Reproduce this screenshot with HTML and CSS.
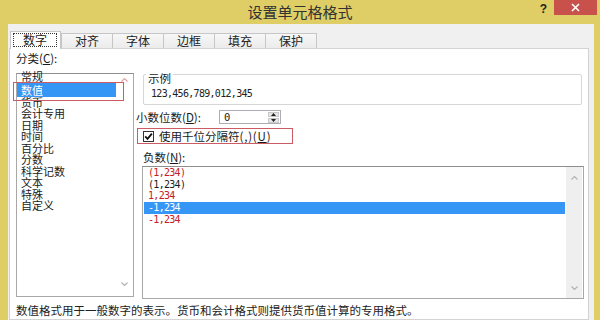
FILE: index.html
```html
<!DOCTYPE html>
<html lang="zh-CN">
<head>
<meta charset="utf-8">
<title>设置单元格格式</title>
<link rel="stylesheet" href="styles.css">
</head>
<body>
<div class="window">
  <div class="titlebar">
    <div></div>
    <div class="title">设置单元格格式</div>
    <div class="controls">
      <span class="help">?</span>
      <span class="close"><svg width="9" height="9" viewBox="0 0 9 9"><path d="M1 1L8 8M8 1L1 8" stroke="#fff" stroke-width="1.6" fill="none"/></svg></span>
    </div>
  </div>
  <div class="frame">
    <div class="tabs">
      <div class="tab active"><span class="focus">数字</span></div>
      <div class="tab">对齐</div>
      <div class="tab">字体</div>
      <div class="tab">边框</div>
      <div class="tab">填充</div>
      <div class="tab">保护</div>
    </div>
    <div class="panel">
      <div class="cols">
        <div class="left">
          <div class="label">分类(<u>C</u>):</div>
          <div class="listbox cat">
            <div class="items">
              <div class="item">常规</div>
              <div class="item sel">数值</div>
              <div class="item">货币</div>
              <div class="item">会计专用</div>
              <div class="item">日期</div>
              <div class="item">时间</div>
              <div class="item">百分比</div>
              <div class="item">分数</div>
              <div class="item">科学记数</div>
              <div class="item">文本</div>
              <div class="item">特殊</div>
              <div class="item">自定义</div>
            </div>
            <div class="vscroll">
              <svg class="chev up-red" width="7" height="4" viewBox="0 0 7 4"><polyline points="0.5,3.5 3.5,0.5 6.5,3.5"/></svg>
              <svg class="chev" width="7" height="4" viewBox="0 0 7 4"><polyline points="0.5,0.5 3.5,3.5 6.5,0.5"/></svg>
            </div>
            <div class="annot"></div>
          </div>
        </div>
        <div class="right">
          <div class="group">
            <div class="legend"><span>示例</span></div>
            <div class="sample num">123,456,789,012,345</div>
          </div>
          <div class="decimals">
            <span class="dlabel">小数位数(<u>D</u>):</span>
            <div class="spin">
              <span class="val num">0</span>
              <div class="spinbtns">
                <span class="sbtn"><svg width="5" height="3" viewBox="0 0 5 3"><polygon points="0,3 2.5,0 5,3"/></svg></span>
                <span class="sbtn"><svg width="5" height="3" viewBox="0 0 5 3"><polygon points="0,0 2.5,3 5,0"/></svg></span>
              </div>
            </div>
          </div>
          <div class="check-row">
            <span class="checkbox"><svg width="9" height="9" viewBox="0 0 9 9"><path d="M1.2 4.4L3.5 6.8L7.9 1.6" stroke="#111" stroke-width="1.8" fill="none"/></svg></span>
            <span class="clabel">使用千位分隔符<span class="ak">(,)(<u>U</u>)</span></span>
          </div>
          <div class="label neg-label">负数(<u>N</u>):</div>
          <div class="listbox neg">
            <div class="items num">
              <div class="item red">(1,234)</div>
              <div class="item">(1,234)</div>
              <div class="item red">1,234</div>
              <div class="item sel">-1,234</div>
              <div class="item red">-1,234</div>
            </div>
            <div class="vscroll track">
              <svg class="chev" width="7" height="4" viewBox="0 0 7 4"><polyline points="0.5,3.5 3.5,0.5 6.5,3.5"/></svg>
              <svg class="chev" width="7" height="4" viewBox="0 0 7 4"><polyline points="0.5,0.5 3.5,3.5 6.5,0.5"/></svg>
            </div>
          </div>
        </div>
      </div>
      <p class="desc">数值格式用于一般数字的表示。货币和会计格式则提供货币值计算的专用格式。</p>
    </div>
  </div>
</div>
</body>
</html>
```

FILE: styles.css
```css
* { box-sizing: border-box; margin: 0; padding: 0; }
html, body { width: 600px; height: 320px; overflow: hidden; }
body {
  background: #dfcd66;
  font-family: "Noto Sans CJK SC", "Noto Sans", sans-serif;
  font-size: 11.5px;
  color: #1a1a1a;
}
u { text-decoration: underline; text-underline-offset: 1px; }

.titlebar {
  height: 24px;
  display: grid;
  grid-template-columns: 1fr auto 1fr;
  align-items: start;
}
.title { font-size: 15px; line-height: 24px; color: #333; }
.controls { display: flex; justify-content: flex-end; align-items: flex-start; }
.help {
  font: bold 12px/18px "Liberation Sans", sans-serif;
  color: #222;
  margin-right: 7px;
}
.close {
  width: 43px;
  height: 15px;
  background: #c8514c;
  display: flex;
  align-items: center;
  justify-content: center;
  margin-right: 3px;
}

.frame {
  margin-left: 8px;
  width: 586px;
  height: 296px;
  background: #f0f0f0;
  padding: 7px 5px 0 1px;
}
.tabs { display: flex; align-items: flex-end; height: 17px; }
.tab {
  width: 52px;
  height: 15px;
  margin-left: -1px;
  border: 1px solid #c6c6c6;
  border-bottom: none;
  background: linear-gradient(#f7f7f7, #ebebeb);
  font-size: 12px;
  line-height: 13px;
  text-align: center;
  color: #222;
}
.tab.active {
  width: 51px;
  height: 18px;
  margin-left: 1px;
  margin-bottom: -1px;
  padding-top: 1px;
  background: #fff;
  position: relative;
  z-index: 1;
}
.tab.active + .tab { margin-left: 0; }
.focus {
  display: block;
  margin-left: 2px;
  width: 44px;
  height: 14px;
  border: 1px dotted #333;
  line-height: 12px;
}

.panel {
  width: 580px;
  height: 272px;
  overflow: hidden;
  background: #fff;
  border: 1px solid #d3d3d3;
  padding: 2px 4px 0 6px;
}
.cols { display: grid; grid-template-columns: 118px 1fr; column-gap: 2px; }

.label { line-height: 14px; }
.left .label { margin-bottom: 8px; }

.listbox {
  display: flex;
  background: #fff;
  border: 1px solid #a8a8a8;
  border-top-color: #8e8e8e;
}
.cat { width: 118px; height: 224px; position: relative; }
.cat .items { width: 99px; margin-top: -3px; font-size: 11px; }
.item { line-height: 11.5px; padding-left: 4px; white-space: nowrap; }
.cat .item.sel { line-height: 14px; background: #3596f5; color: #fff; }
.vscroll {
  flex: 1;
  display: flex;
  flex-direction: column;
  justify-content: space-between;
  align-items: center;
  padding: 4px 0 10px;
}
.chev polyline { fill: none; stroke: #b4b4b4; stroke-width: 1.2; }
.up-red polyline { stroke: #e2a3a6; }
.annot {
  position: absolute;
  left: -4px;
  top: 8px;
  width: 111px;
  height: 19px;
  border: 1px solid #cd5b63;
}

.num {
  font-family: "DejaVu Sans Mono", "Liberation Mono", monospace;
  font-size: 10px;
  letter-spacing: -0.7px;
}

.group {
  margin: 23px 2px 0 7px;
  height: 31px;
  border: 1px solid #d6d6d6;
  border-radius: 2px;
}
.legend { margin-top: -3px; line-height: 12px; padding-left: 2px; }
.legend span { background: #fff; padding: 0 2px; }
.sample { margin-top: 4px; padding-left: 7px; line-height: 12px; color: #222; }

.decimals { margin-top: 5px; height: 14px; display: flex; align-items: center; }
.dlabel { width: 83px; line-height: 14px; }
.spin {
  width: 62px;
  height: 14px;
  border: 1px solid #abadb3;
  display: flex;
  background: #fff;
}
.spin .val { flex: 1; padding-left: 4px; line-height: 12px; font-size: 10.5px; }
.spinbtns { width: 12px; display: flex; flex-direction: column; padding: 1px 1px 1px 0; gap: 1px; }
.sbtn {
  flex: 1;
  background: #e6e6e6;
  border: 1px solid #c9c9c9;
  display: flex;
  align-items: center;
  justify-content: center;
}
.sbtn polygon { fill: #222; }

.check-row {
  margin: 4px 0 0 1px;
  width: 156px;
  height: 16px;
  border: 1px solid #cd5b63;
  display: flex;
  align-items: center;
  padding-left: 5px;
  gap: 5px;
}
.checkbox {
  width: 11px;
  height: 11px;
  border: 1px solid #333;
  background: #fff;
  display: flex;
  align-items: center;
  justify-content: center;
}
.clabel { line-height: 14px; }
.ak { letter-spacing: 0.8px; }

.neg-label { margin-top: 6px; padding-left: 7px; }
.neg { margin: 2px 0 0 6px; height: 133px; }
.neg .items { flex: 1; }
.neg .item { line-height: 11.7px; padding-left: 5px; }
.neg .item.red { color: #c4201f; }
.neg .item.sel { margin: 0 1px; padding-left: 4px; background: #3596f5; color: #fff; }
.track {
  flex: none;
  width: 16px;
  margin-right: 1px;
  background: #efefef;
  padding: 9px 0 8px;
}

.desc { margin-top: 3px; line-height: 16px; color: #222; }
```
